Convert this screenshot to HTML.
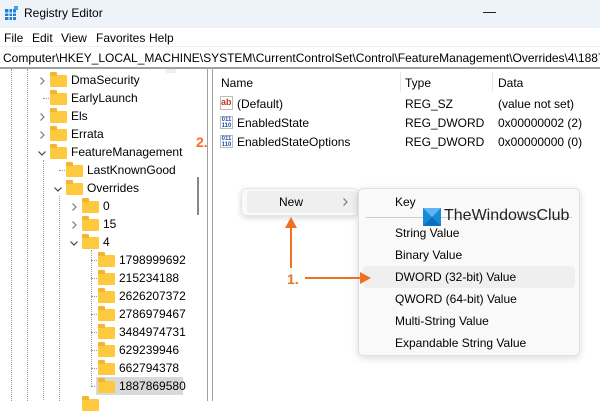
<!DOCTYPE html>
<html><head><style>
*{margin:0;padding:0;box-sizing:border-box}
body{width:600px;height:401px;overflow:hidden;background:#fff;font-family:"Liberation Sans",sans-serif;font-size:12px;color:#000;position:relative}
.a{position:absolute;white-space:nowrap}
.f{position:absolute;width:17px;height:12px;background:#fcc93f;border-radius:1px}
.f:before{content:"";position:absolute;left:0;top:-3px;width:7px;height:4px;background:#f2b531;border-radius:1px 1px 0 0}
.r{position:absolute;width:8px;height:8px}
.dot{position:absolute;border-left:1px dotted #999}
.hd{position:absolute;border-top:1px dotted #999;width:8px}
</style></head><body>
<svg width="0" height="0" style="position:absolute"><defs>
<symbol id="cr" viewBox="0 0 8 8"><path d="M2.5 0.5L6 4L2.5 7.5" fill="none" stroke="#777" stroke-width="1.2"/></symbol>
<symbol id="cd" viewBox="0 0 8 8"><path d="M0.5 2.5L4 6L7.5 2.5" fill="none" stroke="#444" stroke-width="1.2"/></symbol>
</defs></svg>
<div class="a" style="left:0;top:0;width:600px;height:28px;background:#eef2f9"></div>
<svg class="a" style="left:5px;top:6px" width="14" height="14"><rect x="0" y="3" width="11" height="11" fill="#1e7fd6"/><g stroke="#fff" stroke-width="1"><line x1="0" y1="7" x2="11" y2="7"/><line x1="0" y1="10.5" x2="11" y2="10.5"/><line x1="4" y1="3" x2="4" y2="14"/><line x1="7.5" y1="3" x2="7.5" y2="14"/></g><rect x="9" y="0" width="4" height="4" fill="#3aa0ee"/></svg>
<div class="a" style="left:24px;top:6px;font-size:12px">Registry Editor</div>
<div class="a" style="left:483px;top:4px;font-size:13px">—</div>
<div class="a" style="left:4px;top:31px">File</div>
<div class="a" style="left:32px;top:31px">Edit</div>
<div class="a" style="left:61px;top:31px">View</div>
<div class="a" style="left:96px;top:31px">Favorites</div>
<div class="a" style="left:149px;top:31px">Help</div>
<div class="a" style="left:0;top:46px;width:600px;height:1px;background:#f0f0f0"></div>
<div class="a" style="left:0;top:51px;width:600px;overflow:hidden;padding-left:3px">Computer\HKEY_LOCAL_MACHINE\SYSTEM\CurrentControlSet\Control\FeatureManagement\Overrides\4\1887869580</div>
<div class="a" style="left:0;top:67px;width:600px;height:2px;background:#a0a0a0"></div>
<div class="a" style="left:207px;top:69px;width:1px;height:332px;background:#a0a0a0"></div>
<div class="a" style="left:212px;top:69px;width:1px;height:332px;background:#a0a0a0"></div>
<div class="a" style="left:197px;top:177px;width:2px;height:38px;background:#888"></div>
<div class="a" style="left:166px;top:69px;width:10px;height:4px;background:#eee"></div>
<div class="dot" style="left:11px;top:69px;height:332px"></div>
<div class="dot" style="left:27px;top:69px;height:332px"></div>
<div class="dot" style="left:43px;top:160px;height:240px"></div>
<div class="dot" style="left:59px;top:196px;height:205px"></div>
<div class="dot" style="left:91px;top:250px;height:136px"></div>
<div class="hd" style="left:43px;top:98px"></div>
<div class="hd" style="left:59px;top:170px"></div>
<div class="hd" style="left:91px;top:260px"></div><div class="hd" style="left:91px;top:278px"></div><div class="hd" style="left:91px;top:296px"></div><div class="hd" style="left:91px;top:314px"></div><div class="hd" style="left:91px;top:332px"></div><div class="hd" style="left:91px;top:350px"></div><div class="hd" style="left:91px;top:368px"></div><div class="hd" style="left:91px;top:386px"></div>
<svg class="r" style="left:38px;top:77px"><use href="#cr"/></svg><div class="f" style="left:50px;top:75px"></div><div class="a" style="left:71px;top:73px">DmaSecurity</div>
<div class="f" style="left:50px;top:93px"></div><div class="a" style="left:71px;top:91px">EarlyLaunch</div>
<svg class="r" style="left:38px;top:113px"><use href="#cr"/></svg><div class="f" style="left:50px;top:111px"></div><div class="a" style="left:71px;top:109px">Els</div>
<svg class="r" style="left:38px;top:131px"><use href="#cr"/></svg><div class="f" style="left:50px;top:129px"></div><div class="a" style="left:71px;top:127px">Errata</div>
<svg class="r" style="left:38px;top:149px"><use href="#cd"/></svg><div class="f" style="left:50px;top:147px"></div><div class="a" style="left:71px;top:145px">FeatureManagement</div>
<div class="f" style="left:66px;top:165px"></div><div class="a" style="left:87px;top:163px">LastKnownGood</div>
<svg class="r" style="left:54px;top:185px"><use href="#cd"/></svg><div class="f" style="left:66px;top:183px"></div><div class="a" style="left:87px;top:181px">Overrides</div>
<svg class="r" style="left:70px;top:203px"><use href="#cr"/></svg><div class="f" style="left:82px;top:201px"></div><div class="a" style="left:103px;top:199px">0</div>
<svg class="r" style="left:70px;top:221px"><use href="#cr"/></svg><div class="f" style="left:82px;top:219px"></div><div class="a" style="left:103px;top:217px">15</div>
<svg class="r" style="left:70px;top:239px"><use href="#cd"/></svg><div class="f" style="left:82px;top:237px"></div><div class="a" style="left:103px;top:235px">4</div>
<div class="f" style="left:98px;top:255px"></div><div class="a" style="left:119px;top:253px">1798999692</div>
<div class="f" style="left:98px;top:273px"></div><div class="a" style="left:119px;top:271px">215234188</div>
<div class="f" style="left:98px;top:291px"></div><div class="a" style="left:119px;top:289px">2626207372</div>
<div class="f" style="left:98px;top:309px"></div><div class="a" style="left:119px;top:307px">2786979467</div>
<div class="f" style="left:98px;top:327px"></div><div class="a" style="left:119px;top:325px">3484974731</div>
<div class="f" style="left:98px;top:345px"></div><div class="a" style="left:119px;top:343px">629239946</div>
<div class="f" style="left:98px;top:363px"></div><div class="a" style="left:119px;top:361px">662794378</div>
<div class="a" style="left:96px;top:377px;width:87px;height:18px;background:#d9d9d9"></div>
<div class="f" style="left:98px;top:381px"></div><div class="a" style="left:119px;top:379px">1887869580</div>
<div class="f" style="left:82px;top:399px"></div>
<div class="a" style="left:221px;top:76px">Name</div>
<div class="a" style="left:400px;top:72px;width:1px;height:20px;background:#e5e5e5"></div>
<div class="a" style="left:405px;top:76px">Type</div>
<div class="a" style="left:492px;top:72px;width:1px;height:20px;background:#e5e5e5"></div>
<div class="a" style="left:498px;top:76px">Data</div>
<div class="a" style="left:220px;top:96px;width:13px;height:14px;border:1px solid #bbb;background:#fff;font-size:9px;font-weight:bold;color:#c0392b;line-height:10px">ab</div>
<div class="a" style="left:237px;top:97px">(Default)</div><div class="a" style="left:405px;top:97px">REG_SZ</div><div class="a" style="left:498px;top:97px">(value not set)</div>
<div class="a" style="left:220px;top:116px;width:13px;height:13px;border:1px solid #bbb;font-size:6px;font-weight:bold;color:#1c4fa8;line-height:6px;text-align:center">011<br>110</div>
<div class="a" style="left:237px;top:116px">EnabledState</div><div class="a" style="left:405px;top:116px">REG_DWORD</div><div class="a" style="left:498px;top:116px">0x00000002 (2)</div>
<div class="a" style="left:220px;top:135px;width:13px;height:13px;border:1px solid #bbb;font-size:6px;font-weight:bold;color:#1c4fa8;line-height:6px;text-align:center">011<br>110</div>
<div class="a" style="left:237px;top:135px">EnabledStateOptions</div><div class="a" style="left:405px;top:135px">REG_DWORD</div><div class="a" style="left:498px;top:135px">0x00000000 (0)</div>
<div class="a" style="left:196px;top:134px;color:#f07020;font-weight:bold;font-size:14px">2.</div>
<div class="a" style="left:241px;top:188px;width:117px;height:28px;background:#f9f9f9;border:1px solid #e5e5e5;border-radius:5px;box-shadow:0 2px 6px rgba(0,0,0,.15)"></div>
<div class="a" style="left:247px;top:191px;width:110px;height:22px;background:#efefef;border-radius:4px"></div>
<div class="a" style="left:279px;top:195px">New</div>
<svg class="r" style="left:341px;top:198px"><use href="#cr"/></svg>
<div class="a" style="left:358px;top:188px;width:222px;height:168px;background:#f9f9f9;border:1px solid #e0e0e0;border-radius:5px;box-shadow:0 2px 8px rgba(0,0,0,.15)"></div>
<div class="a" style="left:395px;top:195px">Key</div>
<div class="a" style="left:366px;top:217px;width:206px;height:1px;background:#ccc"></div>
<svg class="a" style="left:423px;top:208px" width="18" height="18"><rect width="18" height="18" fill="#1a88d8"/><path d="M0 0L9 9L18 0Z" fill="#5cb6f2"/><path d="M0 18L9 9L18 18Z" fill="#0f6fbf"/></svg>
<div class="a" style="left:444px;top:207px;font-size:16px;color:#222">TheWindowsClub</div>
<div class="a" style="left:395px;top:226px">String Value</div>
<div class="a" style="left:395px;top:248px">Binary Value</div>
<div class="a" style="left:363px;top:266px;width:212px;height:22px;background:#efefef;border-radius:4px"></div>
<div class="a" style="left:395px;top:270px">DWORD (32-bit) Value</div>
<div class="a" style="left:395px;top:292px">QWORD (64-bit) Value</div>
<div class="a" style="left:395px;top:314px">Multi-String Value</div>
<div class="a" style="left:395px;top:336px">Expandable String Value</div>
<svg class="a" style="left:0;top:0" width="600" height="401"><g stroke="#f07020" stroke-width="2" fill="#f07020"><line x1="291" y1="268" x2="291" y2="226"/><path d="M285 228L291 217L297 228Z" stroke="none"/><line x1="305" y1="278" x2="362" y2="278"/><path d="M360 272L371 278L360 284Z" stroke="none"/></g></svg>
<div class="a" style="left:287px;top:271px;color:#f07020;font-weight:bold;font-size:14px">1.</div>
</body></html>
